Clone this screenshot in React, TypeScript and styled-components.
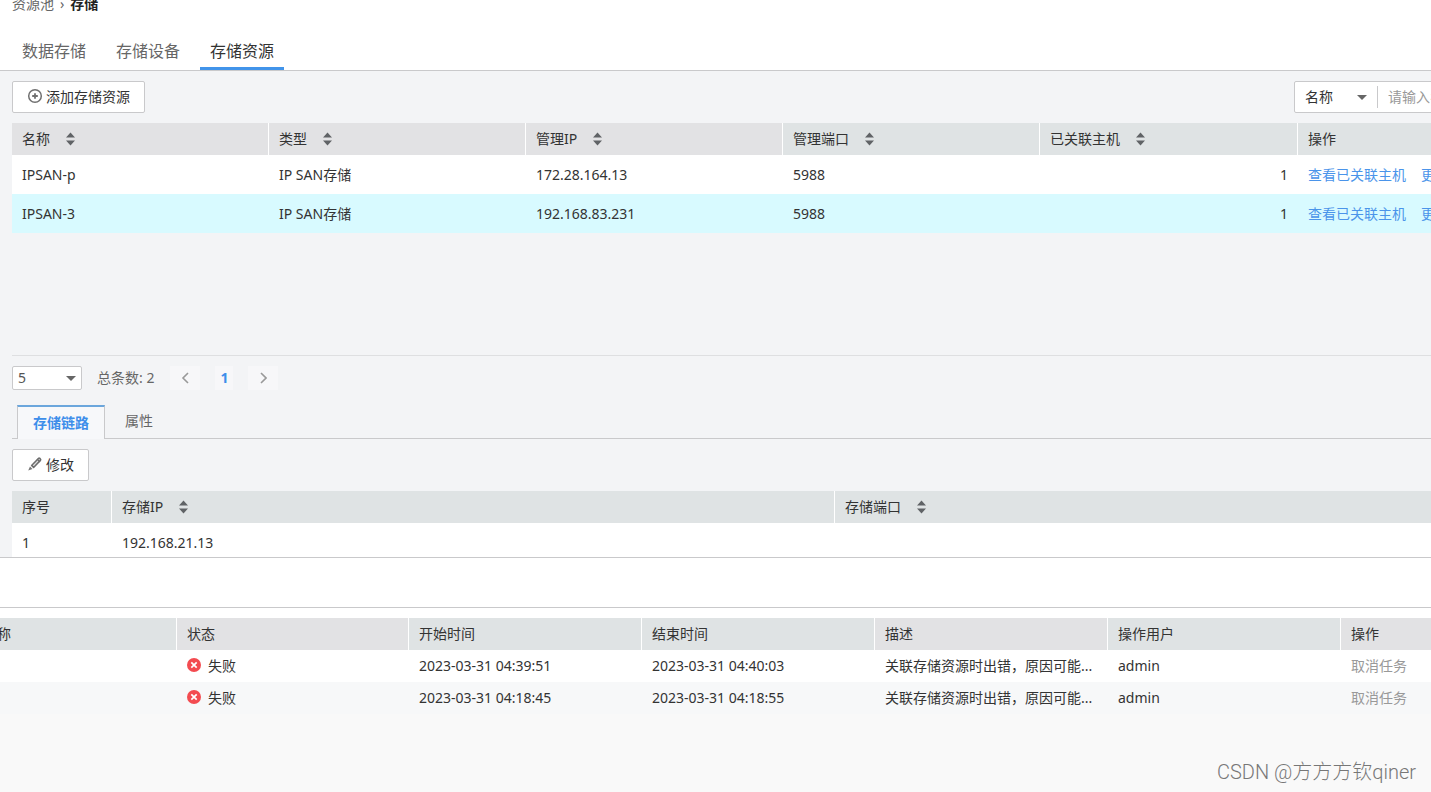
import React from 'react';
import styled, { createGlobalStyle } from 'styled-components';

const GlobalStyle = createGlobalStyle`
  * { box-sizing: border-box; }
  html, body { margin: 0; background: #f9f9f9; overflow-x: hidden; }
  body, button, input, select, table {
    font-family: "Noto Sans", "Noto Sans CJK SC", sans-serif;
    font-size: 14px;
    line-height: 20px;
    color: #333;
  }
`;

const Shell = styled.div`
  position: relative;
  min-height: 100vh;
  overflow: hidden;
`;

const Header = styled.header`
  background: #fff;
  border-bottom: 1px solid #c9c9cb;
`;

const Breadcrumb = styled.nav`
  display: flex;
  gap: 6px;
  padding-left: 12px;
  line-height: 8px;
  color: #666;
  a { color: inherit; text-decoration: none; }
  strong { color: #222; }
`;

const Tabs = styled.div`
  display: flex;
  gap: 10px;
  padding: 26px 12px 0;
`;

const Tab = styled.button<{ $active?: boolean }>`
  height: 36px;
  padding: 0 10px;
  border: 0;
  border-bottom: 3px solid ${p => (p.$active ? '#4194ea' : 'transparent')};
  background: none;
  font-size: 16px;
  color: ${p => (p.$active ? '#333' : '#666')};
`;

const Main = styled.main`
  min-width: 1560px;
  padding: 10px 0 0 12px;
  background: #f3f4f6;
  border-bottom: 1px solid #c9c9cb;
`;

const Toolbar = styled.div`
  display: flex;
  justify-content: space-between;
  margin-bottom: 10px;
`;

const Button = styled.button`
  display: flex;
  align-items: center;
  gap: 3px;
  height: 32px;
  padding: 0 14px;
  border: 1px solid #c9c9cb;
  border-radius: 2px;
  background: #fff;
  svg { margin-bottom: 2px; }
`;

const Search = styled.div`
  display: flex;
  align-items: center;
  width: 266px;
  height: 32px;
  border: 1px solid #c9c9cb;
  border-radius: 2px;
  background: #fff;
`;

const SearchInput = styled.input`
  flex: 1;
  min-width: 0;
  padding: 0 10px;
  border: 0;
  background: none;
  &::placeholder { color: #999; opacity: 1; }
`;

const SelectWrap = styled.label<{ $boxed?: boolean }>`
  position: relative;
  display: block;
  width: ${p => (p.$boxed ? '70px' : '83px')};
  height: ${p => (p.$boxed ? '24px' : '22px')};
  border: solid #c9c9cb;
  border-width: ${p => (p.$boxed ? '1px' : '0 1px 0 0')};
  border-radius: ${p => (p.$boxed ? '2px' : '0')};
  background: #fff;
  select {
    appearance: none;
    width: 100%;
    height: 100%;
    padding: 0 ${p => (p.$boxed ? '5px' : '10px')};
    border: 0;
    background: none;
    color: ${p => (p.$boxed ? '#555' : '#333')};
  }
  svg {
    position: absolute;
    top: 50%;
    right: ${p => (p.$boxed ? '5px' : '10px')};
    margin-top: -2px;
    pointer-events: none;
  }
`;

const Table = styled.table`
  width: 100%;
  table-layout: fixed;
  border-collapse: separate;
  border-spacing: 0;
`;

const Col = styled.col<{ $w?: number }>`
  width: ${p => (p.$w ? `${p.$w}px` : 'auto')};
`;

const Th = styled.th<{ $cool?: boolean }>`
  height: 32px;
  padding: 0 10px;
  text-align: left;
  font-weight: 400;
  white-space: nowrap;
  background: ${p => (p.$cool ? '#dfe3e4' : '#e2e2e4')};
  border-right: 1px solid #fff;
`;

const ThInner = styled.div`
  display: flex;
  align-items: center;
  gap: 16px;
`;

const Row = styled.tr<{ $tone?: 'selected' | 'stripe'; $compact?: boolean }>`
  height: ${p => (p.$compact ? '32px' : '39px')};
  background: ${p => (p.$tone === 'selected' ? '#d8faff' : p.$tone === 'stripe' ? '#f7f8f9' : '#fff')};
`;

const Td = styled.td<{ $right?: boolean }>`
  padding: 0 10px;
  white-space: nowrap;
  text-align: ${p => (p.$right ? 'right' : 'left')};
`;

const Actions = styled.div`
  display: flex;
  gap: 15px;
  a { color: #4a94ea; text-decoration: none; }
`;

const ResourceList = styled.section`
  height: 233px;
  border-bottom: 1px solid #dedfe1;
`;

const Pager = styled.div`
  display: flex;
  align-items: center;
  height: 44px;
  color: #666;
`;

const Total = styled.span`
  margin: 0 16px 0 15px;
`;

const PageButton = styled.button<{ $current?: boolean }>`
  display: flex;
  align-items: center;
  justify-content: center;
  width: ${p => (p.$current ? '18px' : '30px')};
  height: 24px;
  margin-right: 15px;
  padding: 0;
  border: 0;
  background: #f7f7f9;
  color: #3d8eea;
  font-weight: 700;
`;

const DetailTabs = styled.div`
  display: flex;
  height: 34px;
  margin: 5px 0 10px;
  padding-left: 5px;
  box-shadow: inset 0 -1px #c9c9cb;
`;

const DetailTab = styled.button<{ $active?: boolean }>`
  padding: ${p => (p.$active ? '0 15px' : '0 20px 2px')};
  border: solid ${p => (p.$active ? '#c9c9cb' : 'transparent')};
  border-width: ${p => (p.$active ? '2px 1px 0' : '0')};
  border-top-color: ${p => (p.$active ? '#6ba6dc' : 'transparent')};
  background: ${p => (p.$active ? '#f7f8fa' : 'none')};
  color: ${p => (p.$active ? '#3d8eea' : '#666')};
  font-weight: ${p => (p.$active ? 700 : 400)};
`;

const LinkList = styled.section`
  height: 66px;
  overflow: hidden;
`;

const Divider = styled.div`
  height: 50px;
  background: #fff;
  border-bottom: 1px solid #c9c9cb;
`;

const Tasks = styled.section`
  min-width: 1560px;
  margin-left: -27px;
  padding-top: 10px;
  background: linear-gradient(#fff 10px, transparent 10px);
`;

const Status = styled.span`
  display: flex;
  align-items: center;
  gap: 7px;
  svg { margin-bottom: 2px; }
`;

const CancelButton = styled.button`
  padding: 0;
  border: 0;
  background: none;
  color: #999;
`;

const Watermark = styled.div`
  position: absolute;
  right: 15px;
  bottom: 6px;
  font: 300 20px/28px Roboto, "Noto Sans CJK SC", sans-serif;
  color: #777;
`;

const Caret = () => (
  <svg width="10" height="5" viewBox="0 0 10 5" aria-hidden="true">
    <path d="M0 0h10L5 5z" fill="#666" />
  </svg>
);

const SortIcon = () => (
  <svg width="9" height="14" viewBox="0 0 9 14" aria-hidden="true">
    <path d="M4.5 0.5 9 5.5H0zM0 8.5h9l-4.5 5z" fill="#606366" />
  </svg>
);

const PlusIcon = () => (
  <svg width="16" height="16" viewBox="0 0 16 16" fill="none" stroke="#707070" aria-hidden="true">
    <circle cx="8" cy="8" r="6.3" strokeWidth="1.5" />
    <path d="M8 5.2v5.6M5.2 8h5.6" strokeWidth="1.8" />
  </svg>
);

const PencilIcon = () => (
  <svg width="16" height="16" viewBox="0 0 16 16" aria-hidden="true">
    <path
      d="M4.6 9.4 11.4 2.4q.7-.7 1.400 0l.6.6q.7.7 0 1.400L6.600 11.400z"
      fill="#ddd"
      stroke="#6c6c6c"
      strokeWidth="1.500"
      strokeLinejoin="round"
    />
    <path d="M10 3l3 3" stroke="#6c6c6c" strokeWidth="1.200" />
    <path d="M3 10.500 5.500 13 1.200 14.600z" fill="#777" />
  </svg>
);

const ErrorIcon = () => (
  <svg width="14" height="14" viewBox="0 0 14 14" aria-hidden="true">
    <circle cx="7" cy="7" r="7" fill="#f34b50" />
    <path d="M4.300 4.300l5.400 5.400M9.700 4.300l-5.400 5.400" stroke="#fff" strokeWidth="1.700" />
  </svg>
);

const Chevron = ({ d }: { d: string }) => (
  <svg width="8" height="12" viewBox="0 0 8 12" fill="none" stroke="#999" strokeWidth="1.600" aria-hidden="true">
    <path d={d} />
  </svg>
);

type HeadCell = { label: string; sort?: boolean; cool?: boolean };

const Head = ({ cells }: { cells: HeadCell[] }) => (
  <thead>
    <tr>
      {cells.map(c => (
        <Th key={c.label} scope="col" $cool={c.cool}>
          <ThInner>
            {c.label}
            {c.sort && <SortIcon />}
          </ThInner>
        </Th>
      ))}
    </tr>
  </thead>
);

const resources = [
  { name: 'IPSAN-p', ip: '172.28.164.13' },
  { name: 'IPSAN-3', ip: '192.168.83.231', selected: true },
];

const tasks = [
  { start: '2023-03-31 04:39:51', end: '2023-03-31 04:40:03' },
  { start: '2023-03-31 04:18:45', end: '2023-03-31 04:18:55', stripe: true },
];

export default function App() {
  return (
    <Shell lang="zh-CN">
      <GlobalStyle />
      <Header>
        <Breadcrumb>
          <a href="#pool">资源池</a>
          <span>›</span>
          <strong>存储</strong>
        </Breadcrumb>
        <Tabs>
          <Tab>数据存储</Tab>
          <Tab>存储设备</Tab>
          <Tab $active>存储资源</Tab>
        </Tabs>
      </Header>
      <Main>
        <Toolbar>
          <Button><PlusIcon />添加存储资源</Button>
          <Search>
            <SelectWrap>
              <select aria-label="名称"><option>名称</option></select>
              <Caret />
            </SelectWrap>
            <SearchInput placeholder="请输入名称" aria-label="请输入名称" />
          </Search>
        </Toolbar>
        <ResourceList>
          <Table>
            <colgroup>
              <Col $w={257} /><Col $w={257} /><Col $w={257} /><Col $w={257} /><Col $w={258} /><Col />
            </colgroup>
            <Head
              cells={[
                { label: '名称', sort: true },
                { label: '类型', sort: true },
                { label: '管理IP', sort: true },
                { label: '管理端口', sort: true, cool: true },
                { label: '已关联主机', sort: true, cool: true },
                { label: '操作', cool: true },
              ]}
            />
            <tbody>
              {resources.map(r => (
                <Row key={r.name} $tone={r.selected ? 'selected' : undefined}>
                  <Td>{r.name}</Td>
                  <Td>IP SAN存储</Td>
                  <Td>{r.ip}</Td>
                  <Td>5988</Td>
                  <Td $right>1</Td>
                  <Td>
                    <Actions>
                      <a href="#hosts">查看已关联主机</a>
                      <a href="#more">更多</a>
                    </Actions>
                  </Td>
                </Row>
              ))}
            </tbody>
          </Table>
        </ResourceList>
        <Pager>
          <SelectWrap $boxed>
            <select aria-label="总条数"><option>5</option></select>
            <Caret />
          </SelectWrap>
          <Total>总条数: 2</Total>
          <PageButton aria-label="上一页"><Chevron d="M7 1 2 6l5 5" /></PageButton>
          <PageButton $current>1</PageButton>
          <PageButton aria-label="下一页"><Chevron d="M2 1l5 5-5 5" /></PageButton>
        </Pager>
        <DetailTabs>
          <DetailTab $active>存储链路</DetailTab>
          <DetailTab>属性</DetailTab>
        </DetailTabs>
        <Toolbar>
          <Button><PencilIcon />修改</Button>
        </Toolbar>
        <LinkList>
          <Table>
            <colgroup><Col $w={100} /><Col $w={723} /><Col /></colgroup>
            <Head
              cells={[
                { label: '序号', cool: true },
                { label: '存储IP', sort: true, cool: true },
                { label: '存储端口', sort: true, cool: true },
              ]}
            />
            <tbody>
              <Row><Td>1</Td><Td>192.168.21.13</Td><Td /></Row>
            </tbody>
          </Table>
        </LinkList>
      </Main>
      <Divider />
      <Tasks>
        <Table>
          <colgroup>
            <Col $w={204} /><Col $w={232} /><Col $w={233} /><Col $w={233} /><Col $w={233} /><Col $w={233} /><Col />
          </colgroup>
          <Head
            cells={[
              { label: '名称', cool: true },
              { label: '状态' },
              { label: '开始时间', cool: true },
              { label: '结束时间', cool: true },
              { label: '描述' },
              { label: '操作用户', cool: true },
              { label: '操作' },
            ]}
          />
          <tbody>
            {tasks.map(t => (
              <Row key={t.start} $compact $tone={t.stripe ? 'stripe' : undefined}>
                <Td />
                <Td><Status><ErrorIcon />失败</Status></Td>
                <Td>{t.start}</Td>
                <Td>{t.end}</Td>
                <Td>关联存储资源时出错，原因可能...</Td>
                <Td>admin</Td>
                <Td><CancelButton disabled>取消任务</CancelButton></Td>
              </Row>
            ))}
          </tbody>
        </Table>
      </Tasks>
      <Watermark>CSDN @方方方钦qiner</Watermark>
    </Shell>
  );
}
